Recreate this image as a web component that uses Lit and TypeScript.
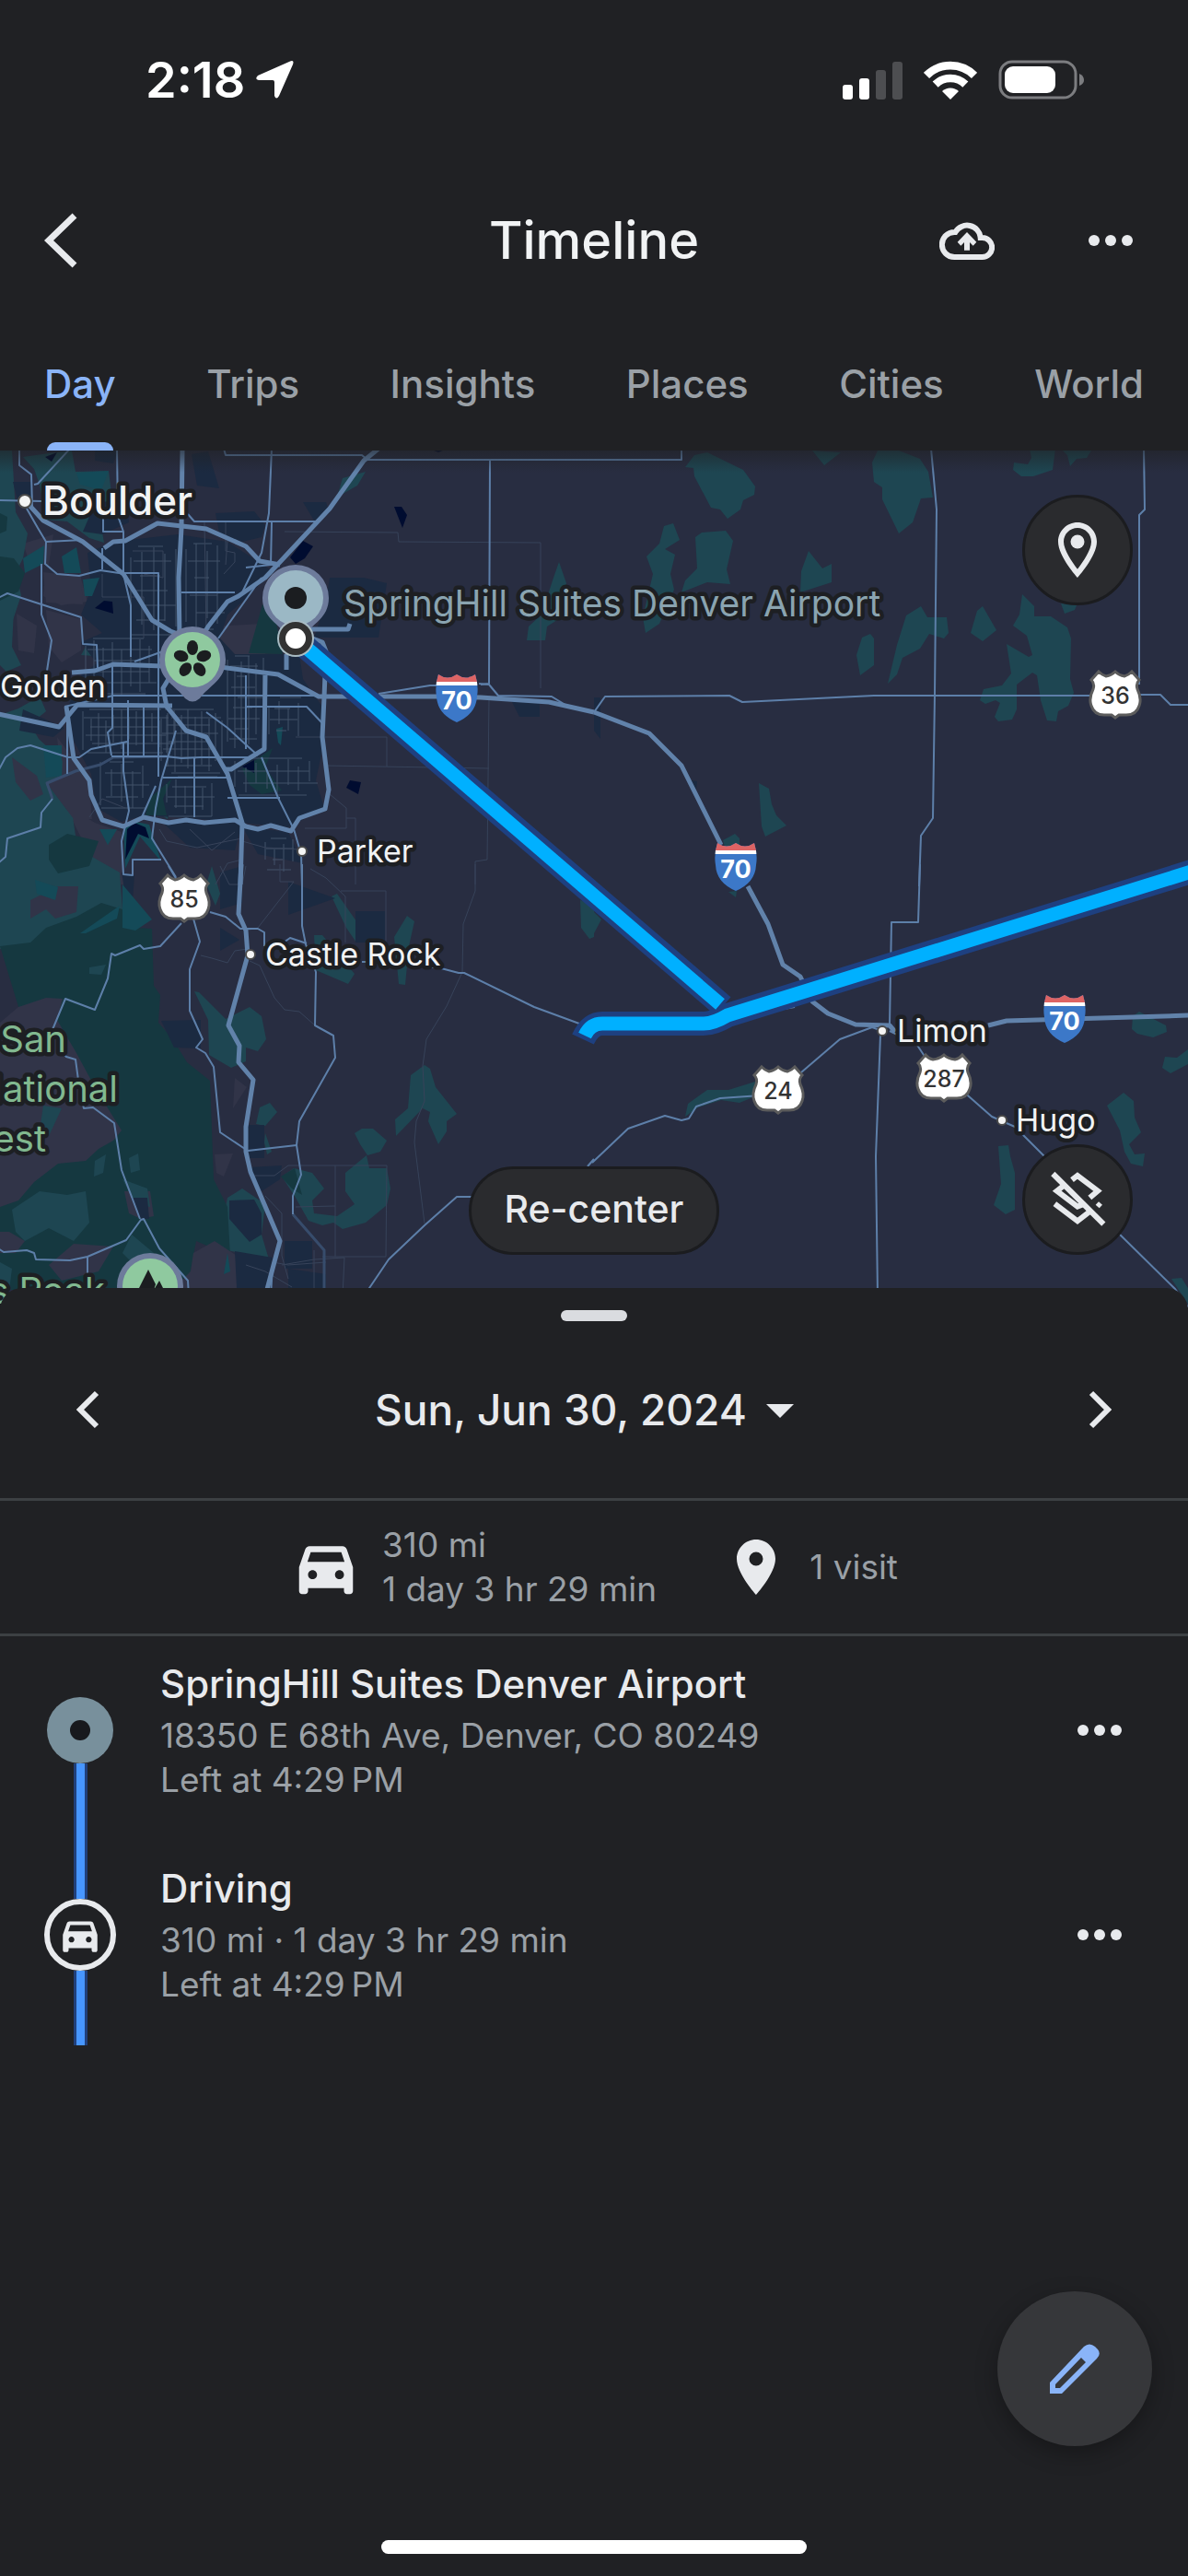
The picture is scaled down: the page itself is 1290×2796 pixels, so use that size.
import { LitElement, html, css, svg } from "lit";
import { customElement, property, state } from "lit/decorators.js";

/* ---------- Map data ----------
   The map is digitised in tiles. Each tile has its own fine grid,
   which is converted to map units by toMap(). */

interface Tile {
  x: number;
  y: number;
  step: number;
}

const NW: Tile = { x: 0, y: 480, step: 0.41135 };
const NE: Tile = { x: 645, y: 480, step: 0.41135 };
const SW: Tile = { x: 0, y: 940, step: 0.41135 };
const SE: Tile = { x: 645, y: 940, step: 0.41135 };
const METRO: Tile = { x: 0, y: 489, step: 0.33333 };
const RANGE: Tile = { x: 0, y: 880, step: 0.33333 };

const toMap = (tile: Tile, coords: string): string =>
  coords
    .trim()
    .split(/\s+/)
    .map((pair) => {
      const [x, y] = pair.split(",").map(Number);
      return `${Math.round(tile.x + x * tile.step)},${Math.round(tile.y + y / 3)}`;
    })
    .join(" ");

type Layer = [Tile, string[]];

const brown: Layer[] = [
  [NW, [
    "120,430 215,445 230,520 160,530 115,500",
    "560,600 690,590 700,690 600,690",
    "150,960 200,1040 235,1110 240,1200 200,1190 160,1080",
    "170,1180 250,1240 320,1270 330,1440 260,1440 230,1330",
    "60,330 140,300 130,400 80,400",
    "540,370 620,400 600,470 530,440",
  ]],
  [METRO, [
    "140,395 265,410 270,500 150,495",
    "55,530 120,570 110,660 60,650",
    "150,520 265,550 265,650 200,690 160,640",
  ]],
];

const forest: Layer[] = [
  [METRO, [
    "0,0 40,0 50,200 90,270 75,350 50,400 70,470 40,560 0,600",
    "75,20 160,10 235,0 245,70 355,65 370,190 330,250 340,300 290,285 220,230 150,225 130,110 110,60",
    "0,470 45,520 40,640 70,700 20,720 0,700",
    "280,640 310,650 310,670 265,665",
    "470,310 525,320 515,345 480,330",
    "575,325 630,315 605,355",
    "690,460 745,420 755,470 725,505 685,490",
    "0,860 60,840 130,800 150,850 100,890 125,940 205,1010 200,1070 160,1090 240,1200 0,1200",
    "385,965 430,980 430,1010 400,1020",
    "505,1130 560,1070 545,1200 485,1160",
    "1100,140 1115,90 1190,70 1165,115 1100,150",
  ]],
  [RANGE, [
    "0,0 235,0 245,80 300,150 390,200 400,320 380,370 250,420 200,450 0,450",
  ]],
  [NW, [
    "265,1260 308,1260 285,1310",
    "1475,390 1495,460 1470,580 1445,600 1440,645 1390,645 1395,600 1430,560 1460,440",
    "735,920 748,940 742,980 735,970",
  ]],
  [NE, [
    "240,80 265,42 298,33 393,90 425,145 423,170 395,188 387,218 352,250 332,220 308,213 264,112 262,85",
    "185,272 210,263 227,317 187,348 214,365 202,430 212,480 172,590 135,622 128,570 155,430 138,372 172,330",
    "268,310 285,295 348,288 367,320 350,415 361,462 298,457 232,490 240,450 272,410",
    "566,353 604,412 627,397 628,455 545,490 548,420",
    "575,27 652,33 607,75",
    "750,20 805,27 860,55 882,95 895,180 862,183 840,262 804,298 760,185 762,148 738,130 734,65",
    "1150,20 1217,20 1210,90 1160,110 1128,110 1107,90 1109,67 1145,72 1155,50",
    "1232,20 1312,27 1300,50 1275,55 1256,77 1250,42",
    "862,533 880,570 932,571 937,620 925,638 885,625 860,672 814,702 800,755 775,787 800,660 825,565",
    "730,623 740,640 740,727 702,760 693,693 708,635",
    "1027,535 1062,612 1027,648 995,622 1012,550",
    "1130,495 1162,535 1162,568 1207,568 1250,602 1260,640 1257,770 1266,815 1252,858 1225,875 1220,908 1197,907 1178,840 1170,760 1156,750 1116,790 1116,870 1103,902 1068,908 1058,895 1072,850 1060,840 1033,852 1018,840 1028,805 1077,792 1102,752 1089,658 1147,700 1156,692 1142,630 1107,597 1122,560",
    "1232,525 1275,530 1270,545 1243,558",
    "435,1110 462,1127 468,1180 482,1215 508,1247 453,1284 443,1250",
    "340,1295 372,1275 384,1290 384,1315 345,1318",
  ]],
  [SW, [
    "512,408 525,410 595,498 660,460 690,490 702,565 680,603 650,590 650,635 610,657 552,615 550,500",
    "1120,648 1135,660 1150,720 1205,808 1180,830 1180,865 1158,905 1130,830 1135,800 1115,790 1045,880 1043,825 1078,790 1085,680",
    "935,870 955,855 985,855 1020,893 1005,930 970,942 950,905",
    "968,942 975,983 1020,985 1030,1050 1020,1105 965,1160 905,1183 880,1160 850,1170 815,1155 780,1080 745,1010 775,983 825,1000 855,1050 825,1090 830,1130 890,1140 935,1100 912,1060 912,1000",
    "712,770 732,800 700,845 677,840 685,785",
    "700,870 718,930 705,938 698,900",
    "875,100 890,90 940,180 940,250 915,200",
    "1075,162 1093,180 1080,260 1070,387 1052,385 1040,230",
    "830,225 850,225 937,350 920,383 835,340",
    "1532,110 1568,130 1568,230 1555,237 1535,200",
    "560,0 580,90 570,130 545,60",
    "600,1080 640,1050 700,1100 690,1200 710,1280 600,1250 590,1140",
  ]],
  [SE, [
    "240,815 247,773 300,730 355,730 425,703 425,750 385,770 335,762 275,785",
    "1440,475 1510,520 1512,540 1475,558 1435,545 1420,530 1422,490",
    "1508,622 1540,625 1568,598 1568,645 1522,675 1500,657",
    "1398,738 1425,765 1427,820 1445,868 1412,907 1428,940 1453,937 1448,978 1417,970 1400,930 1387,862 1355,780",
    "1068,912 1095,910 1098,945 1112,1000 1110,1118 1087,1133 1055,1105 1075,1035",
    "1525,1343 1550,1340 1575,1390 1575,1440",
    "355,85 378,80 375,102",
    "0,150 20,175 0,220",
  ]],
];

const deepForest: Layer[] = [
  [METRO, [
    "0,345 45,350 80,400 60,460 0,490",
    "810,660 855,500 900,560 920,662",
    "0,205 25,215 20,260 0,270",
  ]],
  [RANGE, [
    "160,110 220,75 320,100 290,180 190,205 160,160",
    "0,440 100,430 150,380 250,345 330,300 400,320 440,380 495,385 500,570 522,600 515,690 560,740 610,820 685,880 695,1200 740,1290 750,1450 640,1400 610,1560 0,1560 0,1280 120,1200 200,1100",
    "915,1190 960,1165 985,1250 950,1230",
  ]],
];

const foothills: Layer[] = [
  [RANGE, [
    "100,290 190,245 255,245 250,330 180,350 150,320 100,350",
    "0,690 60,640 150,610 205,612 185,680 250,790 310,900 395,1040 370,1075 320,1100 280,1140 190,1150 110,1210 60,1270 0,1290",
    "630,1440 700,1400 790,1460 770,1560 560,1560 620,1500",
    "700,1120 760,1115 730,1190 705,1180",
    "765,870 805,900 760,970",
    "405,1240 490,1240 500,1320 460,1330 420,1310",
    "30,1370 80,1400 50,1440 0,1440 0,1370",
    "160,1480 240,1410 370,1420 320,1500 200,1530",
  ]],
  [METRO, ["40,1000 120,1060 140,1120 100,1140 50,1080", "150,1080 230,1060 290,1130 300,1200 240,1200"]],
];

const meadow: Layer[] = [
  [RANGE, [
    "40,1300 130,1240 220,1250 280,1240 290,1340 240,1400 160,1360 80,1400 50,1370",
    "310,1140 345,1120 335,1180 305,1190",
    "420,1130 450,1115 455,1170 425,1180",
    "0,1470 40,1490 30,1560 0,1560",
    "400,1440 430,1380 500,1440 480,1520",
    "290,510 345,500 330,535 290,530",
    "400,1200 480,1230 490,1290 440,1280",
    "140,960 200,970 160,1060 130,1040",
  ]],
];

const teal: Layer[] = [
  [METRO, [
    "250,72 355,65 330,130 260,110",
    "200,345 250,315 265,400 210,400",
    "270,420 325,415 300,475 275,475",
    "75,350 145,310 140,370 80,400",
    "140,960 200,960 200,1060 150,1065",
    "900,905 920,900 915,960 905,950",
  ]],
  [RANGE, [
    "400,240 495,355 440,390 400,380 400,310",
    "115,225 190,250 180,290 120,270",
    "325,60 380,60 350,110",
    "740,1440 750,1500 730,1510",
    "260,400 390,310 380,350 280,400",
  ]],
];

const reservoirShore: Layer[] = [
  [NW, [
    "640,1065 720,995 700,1060 745,1135 690,1145 660,1115",
    "395,1160 455,1095 430,1160 440,1215 385,1215",
  ]],
];

const urban: Layer[] = [
  [NW, [
    "230,360 300,325 470,300 600,325 690,395 720,420 640,520 600,560 580,640 620,690 790,690 800,770 850,860 858,960 835,1100 855,1190 760,1255 640,1240 500,1225 380,1215 320,1235 255,1190 240,1080 190,960 180,860 215,760 255,720 215,650 270,620 215,560 240,480",
    "570,230 670,225 700,270 690,310 640,325 580,310",
    "800,195 860,195 870,230 830,255",
    "870,440 960,440 1022,460 1000,635 830,635 860,520",
    "505,40 550,30 578,150 520,140",
    "250,200 330,180 340,260 270,300 220,290",
    "1350,840 1425,840 1425,895 1370,895",
    "640,1250 760,1270 800,1370 680,1340",
    "430,1240 640,1240 620,1330 500,1320",
    "250,27 310,27 300,70 250,60",
    "35,130 85,130 85,200 45,190",
    "60,870 170,930 140,960 50,940",
  ]],
  [NE, ["0,830 18,830 18,965 0,940", "255,1100 272,1105 270,1130 255,1125"]],
  [SW, [
    "605,1090 670,1085 690,1130 690,1200 660,1225 605,1150",
    "425,505 530,500 530,595 460,590",
    "938,148 1015,148 1015,250 938,250",
    "650,843 697,843 697,950 655,950",
    "620,1255 720,1275 700,1373 625,1373",
    "750,1220 825,1220 825,1310 750,1310",
    "760,1310 860,1330 860,1373 760,1373",
    "580,20 640,0 640,120 580,140",
    "760,50 885,105 760,160",
    "660,980 745,975 740,1020 690,1060",
    "580,200 632,240 580,275",
    "345,1080 390,1080 395,1150 370,1150",
    "320,20 355,30 350,110 330,90",
  ]],
];

const lakeShore: Layer[] = [
  [NW, ["330,1390 325,1250 360,1235 395,1245 425,1365 370,1285"]],
];

const water: Layer[] = [
  [NW, [
    "765,375 800,322 826,340 805,378 780,395",
    "1040,210 1060,210 1075,238 1063,278",
    "250,540 275,517 297,518 298,558",
    "913,1125 925,1100 953,1108 945,1147",
    "118,48 150,32 135,63",
    "640,1055 670,1035 670,1078",
    "335,1260 355,1240 385,1255 395,1290 365,1275 330,1360",
    "1145,27 1170,27 1158,33",
  ]],
];

const freeways: Layer[] = [
  [NW, [
    "482,27 478,280 472,440 474,640 460,740 430,800 440,860 490,940 545,960 600,1080 640,1240 635,1440",
    "65,190 115,255 220,325 325,430 400,580 450,615 500,640",
    "275,345 300,325 330,322 415,265 545,282 650,338 685,388 740,400",
    "1000,20 960,60 870,215 740,390 700,440 630,500 600,520 550,600 520,660",
    "820,635 850,650 860,680 855,830 850,960 868,1130 858,1195 790,1225 768,1265 715,1247 680,1260 650,1250 620,1230 540,1238 490,1230 445,1240 380,1222 325,1252 270,1230 240,1150 235,1100 195,1030 175,860",
    "-5,885 155,928 205,855 455,857",
    "190,750 250,745 300,722 430,728",
    "580,733 735,755 840,828 1160,828 1270,832 1450,845 1568,880",
    "700,760 697,1000 610,1065 595,1065",
    "820,610 920,610 925,590",
    "757,690 755,742",
  ]],
  [NE, ["0,880 145,948 232,1053 335,1310"]],
  [SW, [
    "637,-5 630,155 650,210 655,290 603,520 632,585 630,640 668,697 650,850 650,930 662,995 740,1220 700,1400",
  ]],
  [SE, [
    "405,65 460,190 498,320 545,360 575,440 617,480 690,515 780,518 795,540",
    "1040,518 1090,505 1575,487",
  ]],
];

const highways: Layer[] = [
  [NW, [
    "50,20 50,75 82,105 85,210",
    "185,20 100,135 90,137",
    "-5,190 110,192",
    "70,215 100,280 122,325 120,395 150,428 210,435 265,418 330,430",
    "122,325 220,318",
    "110,395 110,560 135,645 125,745",
    "-5,508 20,493 110,528 215,570 220,658 255,660 258,735",
    "308,20 310,240 325,290 325,425 418,425 418,1090",
    "590,20 595,42 955,43 970,58 1575,56",
    "718,20 710,230 690,360 640,490",
    "495,235 512,258 835,258",
    "717,260 715,400 650,408",
    "272,235 272,290 325,290",
    "1294,58 1292,785 1270,790",
    "1000,820 1135,792 1160,792",
    "1265,785 1290,790 1315,825 1455,827 1500,860",
    "480,490 620,490",
    "690,440 575,640",
    "270,345 270,415",
    "170,860 300,826 840,826",
    "650,860 810,860 850,915",
    "-5,1070 15,1025 45,995 80,988 180,1025 210,1025 240,998 335,975",
    "297,722 297,930 285,945 295,1020",
    "465,940 425,1100 410,1190 402,1290 465,1415",
    "325,975 325,1070 340,1200 320,1300 325,1408 350,1410 350,1360 425,1358",
    "430,1092 600,1092",
    "295,1023 440,1023 480,1030 530,1025 655,1025",
    "512,1030 512,1220",
    "600,1158 740,1158",
    "690,1025 735,1158 775,1260 795,1340 797,1445",
    "545,880 600,930 680,1020",
    "355,715 430,680",
    "178,860 178,1080",
    "380,855 380,1023",
    "338,840 338,1020",
    "648,760 648,1000",
    "138,1160 110,1205 108,1255 20,1290 15,1350 -5,1370",
    "375,1220 410,1120",
    "325,430 345,530 345,700",
  ]],
  [NE, [
    "-5,57 230,57 232,20",
    "889,20 905,220 900,820 895,1225 864,1280 859,1445",
    "1452,20 1453,220 1440,237 1440,790",
    "0,880 28,828 358,826 392,846 740,826 1350,825",
    "1430,823 1494,821 1522,856 1575,856",
  ]],
  [SW, [
    "555,150 595,165 635,205 680,203 697,215 697,260",
    "445,0 475,60",
    "480,185 422,262 380,270 370,257 303,290 293,285 285,365 250,467 172,432 135,540",
    "150,590 175,620 200,630 212,740 222,788 245,785 302,838 322,990 370,1150",
    "505,150 528,245 502,335 502,470 535,565 517,592 543,608 564,655 582,868 655,928 783,910",
    "797,-5 797,195 808,255 835,345 832,520 880,552 884,625 790,832 783,910 795,1005 773,1075 772,1135",
    "725,270 765,235 810,252",
    "955,312 1020,313 1165,332 1210,347 1225,347 1410,460 1530,512",
    "-5,1245 10,1258 70,1250 90,1260 95,1280 185,1285 232,1272 332,1217 372,1153 380,1150 420,1245 497,1350 498,1400",
    "232,1275 230,1330",
    "960,1400 1025,1280 1120,1170 1205,1077 1260,1077",
    "720,1300 715,1400",
    "1550,978 1568,955",
  ]],
  [SE, [
    "860,-5 856,184 785,184 780,515",
    "755,550 743,945 748,1400",
    "500,466 530,458",
    "760,537 735,525 650,565 530,690",
    "440,748 332,755 270,783 250,822 230,827 187,812 90,856 -5,965",
    "780,537 850,580 890,650",
    "970,730 1050,815 1110,850 1200,960",
    "1380,1190 1535,1378 1575,1450",
  ]],
];

const backroads: Layer[] = [
  [NW, [
    "750,290 1050,295 1052,325 1428,328 1428,800",
    "860,1052 1290,1063",
    "1290,835 1285,1360 1255,1365 1255,1440",
    "780,960 1020,960 1020,1055",
    "870,1145 915,1190 915,1258 805,1258",
    "915,1225 938,1225 938,1440",
    "595,258 595,355 620,360 620,390 590,430",
    "235,1220 270,1160 330,1190",
    "420,1260 440,1300 520,1320 600,1300 640,1290",
    "640,1300 700,1320 790,1325",
    "570,1440 600,1370 640,1360",
    "270,430 270,505 380,505 380,640",
    "350,355 430,355 430,440 380,430",
    "540,260 545,620",
    "600,320 595,400",
    "500,1260 560,1330 620,1270",
  ]],
  [SW, [
    "1255,-5 1255,80 1222,190 1220,345 1180,455 1125,565 1115,650 1120,765 1098,830 1095,900 1120,1165",
    "820,10 860,40 912,100 912,250",
    "900,80 1018,82 1018,250",
    "670,1008 725,1008 762,975 1020,975 1018,1273 850,1273",
    "885,975 885,1273",
    "740,-5 740,50 775,50 680,200 650,210",
    "660,310 685,325 725,428 750,468 790,475 832,520",
    "530,292 560,300 600,315 620,275 655,270",
    "700,1075 745,1130 745,1270 760,1345",
    "780,1110 885,1108",
    "720,1290 760,1300 860,1290",
    "650,1300 700,1320 770,1370",
    "745,1300 830,1280 910,1275 905,1400",
    "830,1250 830,1373",
    "580,0 605,60 640,60 650,0",
  ]],
];

const parkways: Layer[] = [
  [NW, ["440,1022 300,1025 265,1050 200,1070 125,1110 138,1160"]],
  [SW, ["772,1135 856,1250 856,1400"]],
];

/* Street grids: left, top, right, bottom, column step, row step. */
const streetGrids: [number, number, number, number, number, number][] = [
  [225, 640, 420, 830, 24, 36],
  [220, 870, 460, 1015, 20, 28],
  [425, 870, 590, 1080, 18, 26],
  [600, 695, 700, 1000, 19, 34],
  [345, 340, 470, 630, 30, 48],
  [490, 330, 600, 620, 28, 56],
  [265, 1040, 400, 1200, 28, 38],
  [440, 1090, 580, 1220, 24, 32],
  [620, 1030, 840, 1150, 28, 40],
  [710, 830, 800, 960, 26, 36],
  [700, 1290, 790, 1400, 24, 34],
];

const gridLines = (): string[] => {
  const lines: string[] = [];
  streetGrids.forEach(([l, t, r, b, dx, dy], g) => {
    let n = g;
    for (let x = l; x <= r; x += dx) {
      n++;
      lines.push(`${x},${t + ((n * 23) % 40)} ${x},${b - ((n * 31) % 50)}`);
    }
    for (let y = t; y <= b; y += dy) {
      n++;
      lines.push(`${l + ((n * 17) % 30)},${y} ${r - ((n * 29) % 50)},${y}`);
    }
  });
  return lines;
};

const areas = (layers: Layer[], cls: string) =>
  svg`<g class=${cls}>${layers.map(([tile, shapes]) =>
    shapes.map((s) => svg`<polygon points=${toMap(tile, s)} />`)
  )}</g>`;

const roads = (layers: Layer[], cls: string) =>
  svg`<g class=${cls}>${layers.map(([tile, lines]) =>
    lines.map((s) => svg`<polyline points=${toMap(tile, s)} />`)
  )}</g>`;

const interstate = (x: number, y: number, label: string) => svg`
  <g transform="translate(${x} ${y})">
    <g clip-path="url(#interstate)">
      <rect x="-24" y="-27" width="48" height="54" fill="#3c78c8" />
      <rect x="-24" y="-27" width="48" height="10" fill="#dd6464" />
      <rect x="-24" y="-18" width="48" height="4" fill="#fff" />
    </g>
    <text class="shield-i" x="0" y="12">${label}</text>
  </g>`;

const usRoute = (x: number, y: number, label: string, wide = false) => svg`
  <g transform="translate(${x} ${y})">
    <path
      class="us-shield"
      d=${wide
        ? "M0-25Q-4-21-12-20Q-17-21-20-25L-28-16Q-24-12-26-6Q-31 4-28 12Q-25 22-14 22L-4 22L0 25L4 22L14 22Q25 22 28 12Q31 4 26-6Q24-12 28-16L20-25Q17-21 12-20Q4-21 0-25Z"
        : "M0-25Q-4-21-10-20Q-14-21-18-25L-26-16Q-22-12-24-6Q-29 4-26 12Q-23 22-12 22L-4 22L0 25L4 22L12 22Q23 22 26 12Q29 4 24-6Q22-12 26-16L18-25Q14-21 10-20Q4-21 0-25Z"}
    />
    <text class="shield-us" x="0" y="10">${label}</text>
  </g>`;

const town = (cx: number, cy: number, x: number, y: number, label: string) => svg`
  <circle class="town-dot" cx=${cx} cy=${cy} r="5" />
  <text class="town" x=${x} y=${y}>${label}</text>`;

const pinShape = "M0-36A36 36 0 0 1 36 0C36 22 18 28 8 42Q0 49-8 42C-18 28-36 22-36 0A36 36 0 0 1 0-36Z";

@customElement("timeline-map")
export class TimelineMap extends LitElement {
  static styles = css`
    :host { display: block; }
    svg { display: block; width: 100%; height: auto; background: #282d41; }
    text { font-family: Inter, Roboto, sans-serif; }
    .brown { fill: #313448; }
    .forest { fill: #1e4652; }
    .deep { fill: #153840; }
    .teal { fill: #144a58; }
    .urban { fill: #1b2a41; }
    .water { fill: #000c30; }
    .roads { fill: none; stroke-linejoin: round; }
    .freeway { stroke: #6182aa; stroke-width: 5; }
    .highway { stroke: #5d7fa9; stroke-width: 2; }
    .parkway { stroke: #374c6c; stroke-width: 3; }
    .back { stroke: #37435a; stroke-width: 1; }
    .street { stroke: #43526a; stroke-width: 1; }
    .route { fill: none; stroke-linejoin: round; }
    .casing { stroke: #1e4080; stroke-width: 26; }
    .core { stroke: #00b0ff; stroke-width: 15; }
    .label, .town {
      fill: #f1f3f4;
      stroke: #1d1f23;
      stroke-width: 9;
      stroke-linejoin: round;
      paint-order: stroke;
    }
    .town { font-size: 34px; }
    .city { font-size: 44px; font-weight: 500; }
    .hotel { font-size: 39px; fill: #8aa4b0; }
    .park { font-size: 40px; fill: #81b88f; text-anchor: end; }
    .town-dot { fill: #f4f4f4; stroke: #4a4a4a; stroke-width: 2; }
    .shield-i { fill: #fff; font-size: 27px; font-weight: 700; text-anchor: middle; }
    .shield-us { fill: #333; font-size: 25px; font-weight: 500; text-anchor: middle; }
    .us-shield { fill: #fff; stroke: #5c5c5c; stroke-width: 3; }
    .pin { fill: #6d7b9b; }
    .ink { fill: #1b1d20; }
  `;

  render() {
    return html`
      <svg viewBox="0 489 1290 930" role="img" aria-label="Map of the day's route">
        <defs>
          <clipPath id="interstate">
            <path d="M-20-26Q-10-19 0-26Q10-19 20-26Q24-14 22-2Q21 17 0 26Q-21 17-22-2Q-24-14-20-26Z" />
          </clipPath>
          <linearGradient id="top-shade" x1="0" y1="0" x2="0" y2="1">
            <stop offset="0" stop-color="#202124" stop-opacity="0.6" />
            <stop offset="1" stop-color="#202124" stop-opacity="0" />
          </linearGradient>
        </defs>
        ${areas(brown, "brown")} ${areas(forest, "forest")} ${areas(deepForest, "deep")}
        ${areas(foothills, "brown")} ${areas(meadow, "forest")} ${areas(urban, "urban")}
        ${areas(teal, "teal")} ${areas(reservoirShore, "deep")} ${areas(lakeShore, "teal")}
        ${areas(water, "water")}
        ${roads([[NW, gridLines()]], "roads street")} ${roads(backroads, "roads back")}
        ${roads(parkways, "roads parkway")}
        ${roads(highways, "roads highway")} ${roads(freeways, "roads freeway")}

        <g class="route">
          <g class="casing">
            <path d="M321 693L785 1092" />
            <path d="M633 1128Q641 1111 654 1111L764 1111Q775 1111 790 1102L1310 941" />
          </g>
          <g class="core">
            <path d="M321 693L782 1090" />
            <path d="M635 1124Q641 1111 654 1111L764 1111Q775 1111 790 1102L1310 941" />
          </g>
        </g>

        ${interstate(496, 758, "70")} ${interstate(799, 941, "70")} ${interstate(1156, 1106, "70")}
        ${usRoute(200, 975, "85")} ${usRoute(1211, 754, "36")} ${usRoute(845, 1183, "24")}
        ${usRoute(1025, 1170, "287", true)}

        <circle class="town-dot" cx="27" cy="544" r="7" />
        <text class="label city" x="46" y="559">Boulder</text>
        <text class="town" x="0" y="757">Golden</text>
        ${town(328, 924, 344, 936, "Parker")} ${town(272, 1036, 288, 1048, "Castle Rock")}
        ${town(958, 1119, 974, 1131, "Limon")} ${town(1088, 1216, 1103, 1228, "Hugo")}
        <text class="label hotel" x="373" y="669">SpringHill Suites Denver Airport</text>
        <text class="label park" x="72" y="1142">-San</text>
        <text class="label park" x="128" y="1196">National</text>
        <text class="label park" x="50" y="1250">Forest</text>
        <text class="label park" x="114" y="1415">Pikes Peak</text>

        <g transform="translate(321 649)">
          <path class="pin" d=${pinShape} />
          <circle r="30" fill="#9bb8c5" />
          <circle class="ink" r="12" />
        </g>
        <g transform="translate(209 716)">
          <path class="pin" d=${pinShape} />
          <circle r="30" fill="#8fc99f" />
          ${[0, 72, 144, 216, 288].map(
            (a) => svg`<ellipse class="ink" cx="0" cy="-13" rx="6" ry="8" transform="rotate(${a})" />`
          )}
        </g>
        <g transform="translate(163 1396)">
          <path class="pin" d=${pinShape} />
          <circle r="30" fill="#8fc99f" />
          <path class="ink" d="M-2-18L6-2L4 4L10-6L20 14H-18Z" />
        </g>
        <circle cx="321" cy="693" r="20" fill="#a9bcc4" />
        <circle cx="321" cy="693" r="18" fill="#323232" />
        <circle cx="321" cy="693" r="11" fill="#fff" />

        <rect x="0" y="489" width="1290" height="24" fill="url(#top-shade)" />
      </svg>
    `;
  }
}

/* ---------- Icons ---------- */

const CAR =
  "M18.92 6.01C18.72 5.42 18.16 5 17.5 5h-11c-.66 0-1.21.42-1.42 1.01L3 12v8c0 .55.45 1 1 1h1c.55 0 1-.45 1-1v-1h12v1c0 .55.45 1 1 1h1c.55 0 1-.45 1-1v-8l-2.08-5.99zM7.5 16c-.83 0-1.5-.67-1.5-1.5S6.67 13 7.5 13s1.5.67 1.5 1.5S8.33 16 7.5 16zm9 0c-.83 0-1.5-.67-1.5-1.5s.67-1.5 1.5-1.5 1.5.67 1.5 1.5-.67 1.5-1.5 1.5zM5.8 10.2L6.9 7h10.2l1.1 3.2H5.8z";

const carIcon = (cls: string) => html`<svg class=${cls} viewBox="0 0 24 24" aria-hidden="true"><path fill="#e8eaed" d=${CAR} /></svg>`;

const moreIcon = html`<svg width="48" height="12" viewBox="0 0 48 12" aria-hidden="true">
  <g fill="#e8eaed"><circle cx="6" cy="6" r="6" /><circle cx="24" cy="6" r="6" /><circle cx="42" cy="6" r="6" /></g>
</svg>`;

const chevron = (d: string, w: number, h: number, stroke: number) => html`<svg
  width=${w} height=${h} viewBox="0 0 ${w} ${h}" aria-hidden="true">
  <path d=${d} fill="none" stroke="#e8eaed" stroke-width=${stroke} />
</svg>`;

interface Segment {
  kind: "place" | "drive";
  title: string;
  detail: string;
  time: string;
}

/* One stop or leg of the day, with its marker on the route line. */
@customElement("timeline-segment")
export class TimelineSegment extends LitElement {
  @property({ attribute: false }) segment!: Segment;

  static styles = css`
    :host { display: block; }
    .row { display: grid; grid-template-columns: 78px 1fr 96px; column-gap: 48px; padding: 0 48px; }
    .rail { display: flex; flex-direction: column; align-items: center; }
    .line { box-sizing: border-box; width: 15px; background: #4796ff; border: solid #20407c; border-width: 0 3px; }
    .before { height: 63px; }
    .blank { height: 66px; }
    .after { flex: 1; }
    .place { width: 72px; height: 72px; border-radius: 50%; background: #78909c; display: grid; place-items: center; }
    .place::after { content: ""; width: 22px; height: 22px; border-radius: 50%; background: #18191d; }
    .drive { box-sizing: border-box; width: 78px; height: 78px; border: 6px solid #e8eaed; border-radius: 50%; display: grid; place-items: center; }
    .car { width: 50px; height: 50px; }
    .text { padding: 24px 0 42px; }
    h2 { margin: 0 0 4px; font-size: 42px; line-height: 56px; font-weight: 500; color: #e8eaed; }
    p { margin: 0; font-size: 37px; line-height: 48px; color: #9aa0a6; }
    button { align-self: start; height: 96px; margin-top: 54px; padding: 0; border: 0; background: none; display: grid; place-items: center; cursor: pointer; }
  `;

  render() {
    const { kind, title, detail, time } = this.segment;
    const place = kind === "place";
    return html`
      <div class="row">
        <div class="rail">
          <div class=${place ? "blank" : "line before"}></div>
          ${place ? html`<div class="place"></div>` : html`<div class="drive">${carIcon("car")}</div>`}
          <div class="line after"></div>
        </div>
        <div class="text">
          <h2>${title}</h2>
          <p>${detail}</p>
          <p>${time}</p>
        </div>
        <button type="button" aria-label="More options for ${title}">${moreIcon}</button>
      </div>
    `;
  }
}

@customElement("app-root")
export class AppRoot extends LitElement {
  @state() private tab = "Day";

  private tabs = ["Day", "Trips", "Insights", "Places", "Cities", "World"];

  private segments: Segment[] = [
    {
      kind: "place",
      title: "SpringHill Suites Denver Airport",
      detail: "18350 E 68th Ave, Denver, CO 80249",
      time: "Left at 4:29\u2009PM",
    },
    {
      kind: "drive",
      title: "Driving",
      detail: "310 mi · 1 day 3 hr 29 min",
      time: "Left at 4:29\u2009PM",
    },
  ];

  static styles = css`
    :host {
      display: flex;
      flex-direction: column;
      position: relative;
      min-height: 100vh;
      background: #202124;
      color: #e8eaed;
      font-family: Inter, Roboto, sans-serif;
    }
    button { font: inherit; color: inherit; border: 0; padding: 0; margin: 0; background: none; cursor: pointer; }
    svg { display: block; }

    .status { display: flex; justify-content: space-between; align-items: center; height: 171px; padding: 2px 112px 0 158px; box-sizing: border-box; }
    .clock { display: flex; align-items: center; gap: 12px; font-size: 54px; line-height: 60px; font-weight: 600; color: #fff; }
    .signals { display: flex; align-items: center; gap: 23px; }

    .bar { display: grid; grid-template-columns: 1fr auto 1fr; align-items: center; height: 180px; padding: 0 48px; }
    .bar h1 { margin: 0; font-size: 56px; line-height: 72px; font-weight: 500; color: #f1f3f4; }
    .back { justify-self: start; width: 72px; height: 96px; }
    .actions { justify-self: end; display: flex; align-items: center; gap: 102px; padding-right: 12px; }

    .tabs { display: flex; justify-content: space-between; height: 138px; padding: 0 48px; }
    .tab { display: flex; flex-direction: column; justify-content: space-between; align-items: center; padding-top: 42px; font-size: 42px; line-height: 48px; font-weight: 500; color: #9aa0a6; }
    .tab[aria-selected="true"] { color: #8ab4f8; }
    .tab[aria-selected="true"]::after { content: ""; width: 72px; height: 9px; border-radius: 9px 9px 0 0; background: #8ab4f8; }

    .map { position: relative; }
    .round { box-sizing: border-box; width: 120px; height: 120px; border-radius: 50%; background: #2a2b2e; border: 3px solid #1b1c1f; display: grid; place-items: center; }
    .overlay { position: absolute; inset: 48px 60px 57px; display: flex; flex-direction: column; justify-content: space-between; align-items: flex-end; }
    .lower { display: grid; grid-template-columns: 1fr auto 1fr; align-items: end; width: 100%; }
    .lower .round { justify-self: end; }
    .recenter { grid-column: 2; box-sizing: border-box; height: 96px; padding: 0 36px 4px; border-radius: 48px; background: #2a2b2e; border: 3px solid #1b1c1f; font-size: 41px; font-weight: 500; }

    .sheet { position: relative; flex: 1; margin-top: -21px; border-radius: 24px 24px 0 0; background: #202124; }
    .handle { width: 72px; height: 12px; margin: 0 auto; border-radius: 6px; background: #dadce0; }
    .grab { padding: 24px 0 0; }
    .date-row { display: flex; justify-content: space-between; align-items: center; height: 192px; padding: 0 72px; border-bottom: 3px solid #3c4043; }
    .step { width: 48px; height: 96px; display: grid; place-items: center; }
    .date { display: flex; align-items: center; font-size: 46px; line-height: 60px; font-weight: 500; }

    .summary { display: flex; justify-content: center; align-items: center; gap: 72px; padding: 24px 0; border-bottom: 3px solid #3c4043; font-size: 37px; line-height: 48px; color: #9aa0a6; }
    .stat { display: flex; align-items: center; gap: 22px; }
    .stat p { margin: 0; }
    .car { width: 78px; height: 78px; }

    .list { margin: 0; padding: 0; list-style: none; }

    .fab { position: absolute; right: 39px; bottom: 141px; width: 168px; height: 168px; border-radius: 50%; background: #36373a; box-shadow: 0 8px 24px rgba(0, 0, 0, 0.3); display: grid; place-items: center; }
    .home { position: absolute; left: 50%; bottom: 24px; width: 462px; height: 15px; margin-left: -231px; border-radius: 8px; background: #fff; }
  `;

  render() {
    return html`
      <div class="status">
        <div class="clock">
          <span>2:18</span>
          <svg width="41" height="41" viewBox="0 0 41 41" aria-hidden="true">
            <path fill="#fff" d="M36 1Q42-2 40 4L25 38Q22 43 20 38V23Q20 21 18 21H3Q-2 20 2 16Z" />
          </svg>
        </div>
        <div class="signals">
          <svg width="65" height="42" viewBox="0 0 65 42" aria-hidden="true">
            <rect x="0" y="26" width="11" height="16" rx="3" fill="#fff" />
            <rect x="18" y="19" width="11" height="23" rx="3" fill="#fff" />
            <rect x="36" y="10" width="11" height="32" rx="3" fill="#4d4e51" />
            <rect x="54" y="1" width="11" height="41" rx="3" fill="#4d4e51" />
          </svg>
          <svg width="58" height="42" viewBox="0 0 174 126" aria-hidden="true">
            <path fill="none" stroke="#fff" stroke-width="26" d="M9 48A110 110 0 0 1 165 48" />
            <path fill="none" stroke="#fff" stroke-width="26" d="M38 77A70 70 0 0 1 136 77" />
            <path fill="#fff" d="M87 126L60 99A39 39 0 0 1 114 99Z" />
          </svg>
          <svg width="94" height="43" viewBox="0 0 94 43" aria-hidden="true">
            <rect x="2" y="2" width="82" height="39" rx="13" fill="none" stroke="#7c7d80" stroke-width="3" />
            <rect x="7" y="7" width="55" height="29" rx="9" fill="#fff" />
            <path d="M88 15Q93 17 93 22Q93 26 88 28Z" fill="#7c7d80" />
          </svg>
        </div>
      </div>

      <header class="bar">
        <button class="back" type="button" aria-label="Back">${chevron("M33 3L5 30L33 57", 36, 60, 7)}</button>
        <h1>Timeline</h1>
        <div class="actions">
          <button type="button" aria-label="Backup">
            <svg width="60" height="42" viewBox="420 600 180 126" aria-hidden="true">
              <path fill="none" stroke="#e8eaed" stroke-width="18" d="M469 717H560A31 31 0 0 0 560 654H554A44 44 0 0 0 472 636H469A40 40 0 0 0 469 717Z" />
              <path fill="#e8eaed" d="M510 636L541 668L530 680L519 669V695H501V669L490 680L479 668Z" />
            </svg>
          </button>
          <button type="button" aria-label="More options">${moreIcon}</button>
        </div>
      </header>

      <nav class="tabs" role="tablist">
        ${this.tabs.map(
          (t) => html`<button
            class="tab"
            type="button"
            role="tab"
            aria-selected=${t === this.tab ? "true" : "false"}
            @click=${() => (this.tab = t)}
          >${t}</button>`
        )}
      </nav>

      <section class="map">
        <timeline-map></timeline-map>
        <div class="overlay">
          <button class="round" type="button" aria-label="Show places">
            <svg width="72" height="72" viewBox="0 0 24 24" aria-hidden="true">
              <path fill="#e8eaed" d="M12 2C8.13 2 5 5.13 5 9c0 5.25 7 13 7 13s7-7.75 7-13c0-3.87-3.13-7-7-7zM7 9c0-2.76 2.24-5 5-5s5 2.24 5 5c0 2.88-2.88 7.19-5 9.88C9.92 16.21 7 11.85 7 9z" />
              <circle cx="12" cy="9" r="2.5" fill="#e8eaed" />
            </svg>
          </button>
          <div class="lower">
            <button class="recenter" type="button">Re-center</button>
            <button class="round" type="button" aria-label="Hide layers">
              <svg width="72" height="72" viewBox="132 138 216 216" aria-hidden="true">
                <g fill="none" stroke="#e8eaed" stroke-width="18">
                  <path d="M160 162L325 326" />
                  <path d="M222 182L240 168L306 218L280 240" />
                  <path d="M196 200L173 218L240 269L262 260" />
                  <path d="M166 260L240 316L284 282" />
                  <path d="M205 210L250 256" stroke-width="9" />
                </g>
                <path fill="#e8eaed" d="M309 253L321 263L311 274L299 263Z" />
              </svg>
            </button>
          </div>
        </div>
      </section>

      <main class="sheet">
        <div class="grab"><div class="handle"></div></div>
        <div class="date-row">
          <button class="step" type="button" aria-label="Previous day">${chevron("M23 3L5 21L23 39", 28, 42, 6)}</button>
          <button class="date" type="button">
            Sun, Jun 30, 2024
            <svg width="72" height="72" viewBox="0 0 72 72" aria-hidden="true"><path fill="#e8eaed" d="M21 30H51L36 45Z" /></svg>
          </button>
          <button class="step" type="button" aria-label="Next day">${chevron("M5 3L23 21L5 39", 28, 42, 6)}</button>
        </div>
        <div class="summary">
          <div class="stat">
            ${carIcon("car")}
            <div>
              <p>310 mi</p>
              <p>1 day 3 hr 29 min</p>
            </div>
          </div>
          <div class="stat">
            <svg width="72" height="72" viewBox="0 0 24 24" aria-hidden="true">
              <path fill="#e8eaed" fill-rule="evenodd" d="M12 2C8.13 2 5 5.13 5 9c0 5.25 7 13 7 13s7-7.75 7-13c0-3.87-3.13-7-7-7zm0 9.500a2.500 2.500 0 1 1 0-5 2.500 2.500 0 0 1 0 5z" />
            </svg>
            <p>1 visit</p>
          </div>
        </div>
        <ul class="list">
          ${this.segments.map((s) => html`<li><timeline-segment .segment=${s}></timeline-segment></li>`)}
        </ul>
      </main>

      <button class="fab" type="button" aria-label="Edit day">
        <svg width="54" height="54" viewBox="0 0 54 54" aria-hidden="true">
          <path fill="#8ab4f8" fill-rule="evenodd" d="M0 42L37 3Q43-2 49 3L52 6Q56 11 51 16L13 54H0ZM6 44V48H11L39 20L34 15Z" />
        </svg>
      </button>
      <div class="home"></div>
    `;
  }
}
